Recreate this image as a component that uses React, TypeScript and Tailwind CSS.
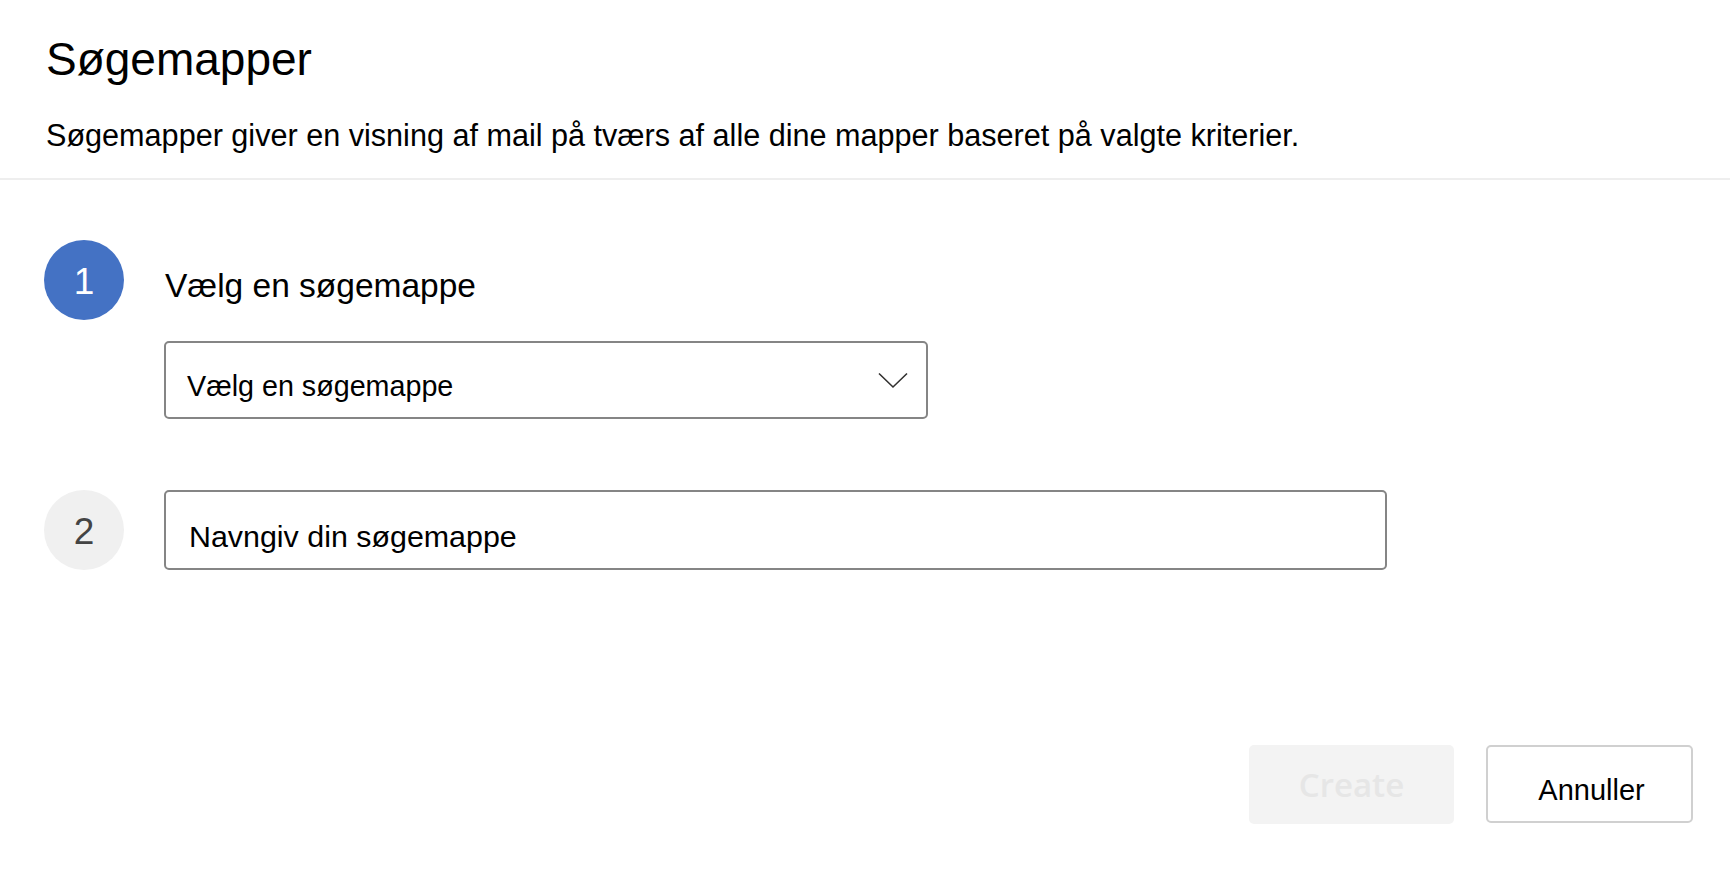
import React from 'react';

const font = { fontFamily: '"Liberation Sans", Arial, sans-serif' };

function StepCircle({ n, active }: { n: number; active?: boolean }) {
  return (
    <div
      className={
        active
          ? 'w-[80px] h-[80px] shrink-0 rounded-full bg-[#4472c4] text-white flex items-center justify-center text-[37px] pt-[4px]'
          : 'w-[80px] h-[80px] shrink-0 rounded-full bg-[#f0f0f0] text-[#444444] flex items-center justify-center text-[37px] pt-[4px]'
      }
    >
      {n}
    </div>
  );
}

function Chevron() {
  return (
    <svg width="30" height="17" viewBox="0 0 30 17" fill="none" className="shrink-0">
      <polyline points="1,1.5 15,15 29,1.5" stroke="#323130" strokeWidth="1.6" />
    </svg>
  );
}

export default function App() {
  return (
    <div className="w-full h-[878px] bg-white text-black overflow-hidden" style={font}>
      {/* Header */}
      <div className="pl-[46px] pt-[31px] pb-[23px]">
        <h1 className="text-[46px] leading-[56px] font-normal">Søgemapper</h1>
        <p className="mt-[28px] text-[30.6px] leading-[40px]">
          Søgemapper giver en visning af mail på tværs af alle dine mapper baseret på valgte kriterier.
        </p>
      </div>
      <div className="h-[2px] bg-[#eeeeee]" />

      {/* Steps */}
      <div className="pl-[44px] pt-[60px]">
        <div className="flex gap-[40px] items-start">
          <StepCircle n={1} active />
          <div className="flex flex-col">
            <div className="mt-[26px] text-[33.5px] leading-[40px] pl-[1px]">Vælg en søgemappe</div>
            <div className="mt-[35px] w-[764px] h-[78px] border-2 border-[#858585] rounded-[5px] flex items-start justify-between pl-[21px] pr-[18px]">
              <span className="pt-[27px] text-[28.7px] leading-[32px]">Vælg en søgemappe</span>
              <div className="pt-[29px]">
                <Chevron />
              </div>
            </div>
          </div>
        </div>

        <div className="flex gap-[40px] items-start mt-[71px]">
          <StepCircle n={2} />
          <div className="w-[1223px] h-[80px] border-2 border-[#858585] rounded-[5px] pl-[23px] pt-[27px]">
            <span className="text-[30.4px] leading-[34px]">Navngiv din søgemappe</span>
          </div>
        </div>
      </div>

      {/* Footer buttons */}
      <div className="flex justify-end gap-[32px] pr-[37px] mt-[175px]">
        <button
          disabled
          className="w-[205px] h-[79px] rounded-[5px] bg-[#f3f3f3] text-[#e6e6e6] text-[33px] font-semibold flex items-center justify-center"
          style={{ fontFamily: '"Open Sans", "Noto Sans", sans-serif' }}
        >
          Create
        </button>
        <button className="w-[207px] h-[78px] rounded-[5px] border-2 border-[#d0d0d0] bg-white text-black text-[29px] flex items-center justify-center pt-[13px] pl-[4px]">
          Annuller
        </button>
      </div>
    </div>
  );
}
